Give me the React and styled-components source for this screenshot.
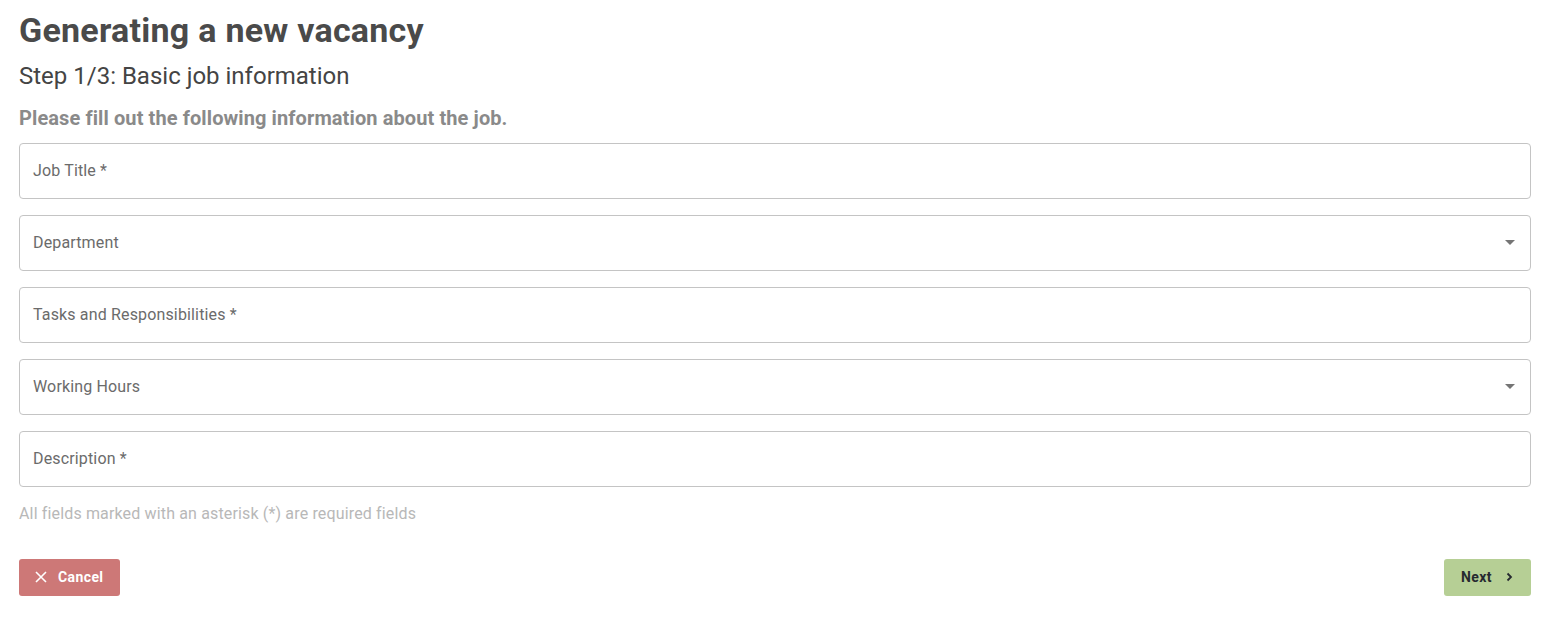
import React from 'react'
import styled, { createGlobalStyle } from 'styled-components'

const GlobalStyle = createGlobalStyle`
  body {
    margin: 0;
    background: #fff;
    font-family: Roboto, "Liberation Sans", sans-serif;
  }
`

const Page = styled.div`
  padding: 9px 13px 0 19px;
`

const Title = styled.h1`
  margin: 0;
  font-size: 34px;
  font-weight: 700;
  line-height: 42px;
  letter-spacing: 0.25px;
  color: #4a4a4a;
`

const StepTitle = styled.h2`
  margin: 9px 0 0;
  font-size: 24px;
  font-weight: 400;
  line-height: 32px;
  color: #444;
`

const Intro = styled.p`
  margin: 10px 0 0;
  font-size: 20px;
  font-weight: 700;
  line-height: 32px;
  letter-spacing: 0.1px;
  color: #8a8a8a;
`

const Form = styled.div`
  margin-top: 9px;
  display: flex;
  flex-direction: column;
  gap: 16px;
`

const Field = styled.div`
  height: 56px;
  box-sizing: border-box;
  border: 1px solid #c4c4c4;
  border-radius: 4px;
  display: flex;
  align-items: center;
  justify-content: space-between;
  padding: 0 13px 1px;
`

const Label = styled.span`
  font-size: 16px;
  letter-spacing: 0.15px;
  color: #6b6b6b;
`

const Caret = styled.span`
  width: 0;
  height: 0;
  border-left: 5px solid transparent;
  border-right: 5px solid transparent;
  border-top: 5px solid #757575;
  margin-right: 2px;
`

const Hint = styled.p`
  margin: 15px 0 0;
  font-size: 16px;
  line-height: 24px;
  letter-spacing: 0.15px;
  color: #b8b8b8;
`

const Actions = styled.div`
  margin-top: 33px;
  display: flex;
  justify-content: space-between;
`

const Button = styled.button`
  height: 37px;
  border: none;
  border-radius: 3px;
  display: flex;
  align-items: center;
  font-family: Roboto, "Liberation Sans", sans-serif;
  font-size: 14px;
  font-weight: 700;
  letter-spacing: 0.4px;
  cursor: pointer;
  background: ${p => (p.$variant === 'danger' ? '#cd7877' : '#b6cf95')};
  color: ${p => (p.$variant === 'danger' ? '#fff' : '#262a30')};
  gap: ${p => (p.$variant === 'danger' ? '11px' : '11px')};
  padding: ${p => (p.$variant === 'danger' ? '0 17px 2px 16px' : '0 16px 2px 17px')};
`

const fields = [
  { label: 'Job Title *' },
  { label: 'Department', select: true },
  { label: 'Tasks and Responsibilities *' },
  { label: 'Working Hours', select: true },
  { label: 'Description *' },
]

export default function App() {
  return (
    <Page>
      <GlobalStyle />
      <Title>Generating a new vacancy</Title>
      <StepTitle>Step 1/3: Basic job information</StepTitle>
      <Intro>Please fill out the following information about the job.</Intro>
      <Form>
        {fields.map(f => (
          <Field key={f.label}>
            <Label>{f.label}</Label>
            {f.select && <Caret />}
          </Field>
        ))}
      </Form>
      <Hint>All fields marked with an asterisk (*) are required fields</Hint>
      <Actions>
        <Button $variant="danger">
          <svg width="12" height="12" viewBox="0 0 12 12">
            <path d="M1 1L11 11M11 1L1 11" stroke="#fff" strokeWidth="1.6" />
          </svg>
          Cancel
        </Button>
        <Button>
          Next
          <svg width="12" height="12" viewBox="0 0 12 12">
            <path d="M4.5 2.5L8 6L4.5 9.5" stroke="#262a30" strokeWidth="1.8" fill="none" />
          </svg>
        </Button>
      </Actions>
    </Page>
  )
}
